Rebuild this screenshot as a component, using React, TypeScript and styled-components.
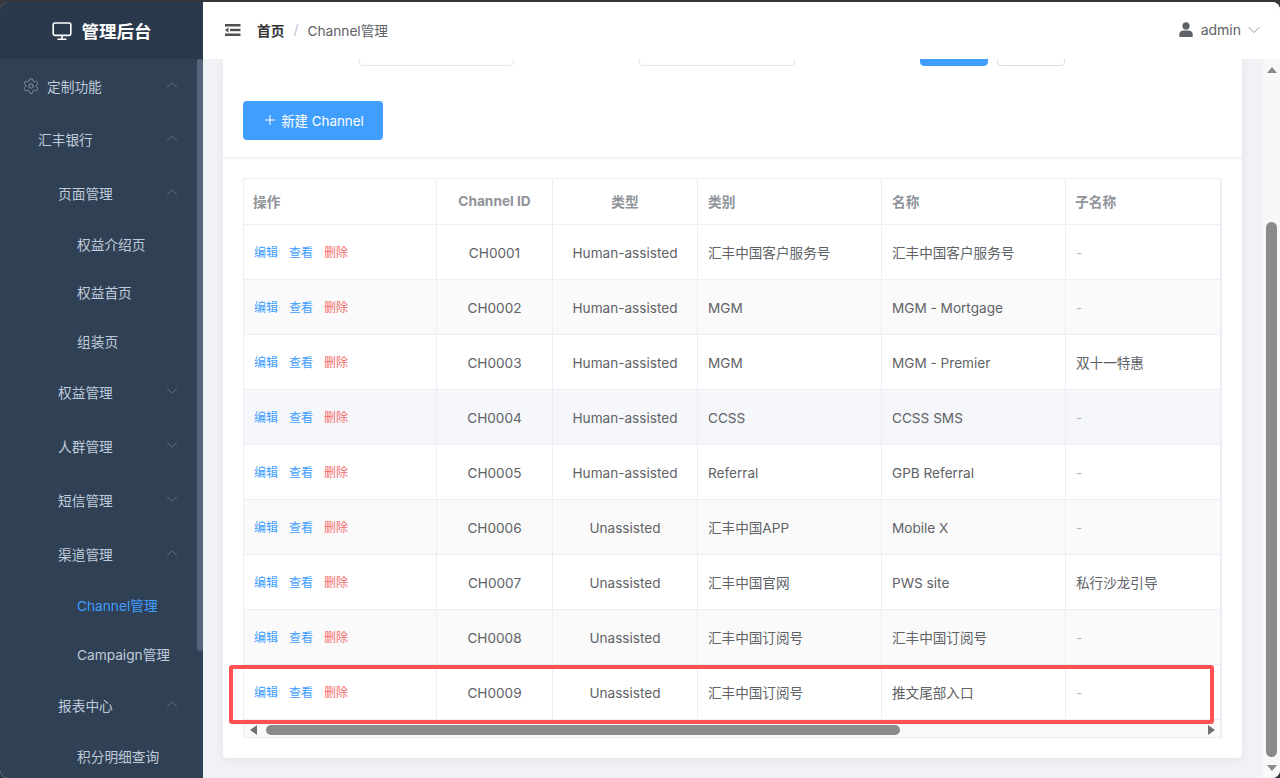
import React from "react";
import styled, { createGlobalStyle } from "styled-components";
import { ChevronDown, ChevronUp, Plus, Settings } from "lucide-react";

const FONT = `Inter, "Noto Sans CJK SC", sans-serif`;

const Global = createGlobalStyle`
  html, body { margin: 0; padding: 0; height: 100%; background: #34363a; overflow: hidden; }
  * { box-sizing: border-box; }
  body { font-family: ${FONT}; }
`;

const Frame = styled.div`
  position: relative; width: 1280px; height: 776px; margin-top: 2px;
  display: flex; overflow: hidden; border-radius: 8px; background: #f0f2f5;
`;
const Sidebar = styled.aside`
  width: 203px; flex: none; display: flex; flex-direction: column; background: #304156;
`;
const Logo = styled.div`
  height: 57px; flex: none; background: #2b394c; display: flex; align-items: center; justify-content: center;
  gap: 10px; color: #fff; font-size: 17.5px; font-weight: 700;
`;
const SideBody = styled.div`
  flex: 1; min-height: 0; display: flex; overflow: hidden;
`;
const Nav = styled.nav`
  flex: 1; min-width: 0;
`;
const NavRow = styled.div<{ $h: number; $pad: number; $active?: boolean }>`
  position: relative; height: ${p => p.$h}px; padding-left: ${p => p.$pad}px; display: flex; align-items: center;
  font-size: 13.7px; color: ${p => (p.$active ? "#409eff" : "#bfcbd9")};
  svg.icon { margin: 0 7px 0 -1px; color: #8f99a5; }
`;
const Caret = styled.span`
  position: absolute; left: 163px; top: 50%; margin-top: -10px; display: flex; color: #76828f;
`;
const SideTrack = styled.div`
  width: 6px; flex: none; background: #304156;
`;
const SideThumb = styled.div`
  width: 6px; height: 592px; background: #55647a; border-radius: 3px;
`;

const Main = styled.main`
  flex: 1; min-width: 0; display: flex; flex-direction: column;
`;
const Header = styled.header`
  height: 57px; flex: none; background: #fff; display: flex; align-items: center; padding: 0 16px 2px 22px;
  font-size: 13.7px; color: #606266;
`;
const Crumb = styled.span<{ $strong?: boolean }>`
  font-weight: ${p => (p.$strong ? 700 : 400)}; color: ${p => (p.$strong ? "#303133" : "#606266")};
  ${p => p.$strong && "margin-left: 16px;"}
`;
const CrumbSep = styled.span`
  margin: 0 9px; color: #c0c4cc; font-size: 14px;
`;
const User = styled.div`
  margin-left: auto; display: flex; align-items: center; gap: 8px; font-size: 14px; color: #606266;
  svg:last-child { margin-left: -5px; color: #7d8084; }
`;
const Body = styled.div`
  flex: 1; min-height: 0; display: flex;
`;
const Content = styled.div`
  flex: 1; min-width: 0; padding: 0 21px 0 20px; overflow: hidden;
`;
const Card = styled.section`
  background: #fff; border-radius: 0 0 4px 4px; box-shadow: 0 2px 12px rgba(0,0,0,.06); height: 699px;
`;
const FilterRow = styled.div`
  height: 7px; overflow: hidden; display: flex; align-items: flex-end; padding-left: 136px;
`;
const FilterInput = styled.div`
  width: 155px; height: 40px; flex: none; margin-right: 125px; border: 1px solid #e4e7ed; border-radius: 4px;
  & + & { width: 156px; }
`;
const FilterButton = styled.div<{ $primary?: boolean }>`
  width: 68px; height: 40px; flex: none; margin-right: 9px; border-radius: 4px;
  background: ${p => (p.$primary ? "#409eff" : "#fff")}; border: 1px solid ${p => (p.$primary ? "#409eff" : "#dcdfe6")};
`;
const Toolbar = styled.div`
  padding: 35px 20px 17px; border-bottom: 2px solid #f2f3f7;
`;
const NewButton = styled.button`
  width: 140px; height: 39px; border: 0; border-radius: 4px; background: #409eff; color: #fff; padding: 0 0 1px;
  display: flex; align-items: center; justify-content: center; gap: 3px; font: 13.4px ${FONT};
`;
const TableArea = styled.div`
  padding: 19px 20px 0;
`;
const TableBox = styled.div`
  width: 979px; height: 560px; border: 1px solid #ebeef5; border-right-width: 2px; position: relative; overflow: hidden;
`;
const Table = styled.table`
  border-collapse: separate; border-spacing: 0; table-layout: fixed; width: 976px;
`;
const Th = styled.th<{ $center?: boolean }>`
  height: 46px; padding: 0 10px 2px; font-size: 13.7px; font-weight: 700; color: #909399;
  text-align: ${p => (p.$center ? "center" : "left")}; border-bottom: 1px solid #ebeef5; border-right: 1px solid #ebeef5;
  &:first-child, &:last-child { padding-left: 9px; }
  &:last-child { border-right: 0; }
`;
const Tr = styled.tr<{ $bg: string }>`
  background: ${p => p.$bg};
`;
const Td = styled.td<{ $center?: boolean; $muted?: boolean; $latin?: boolean }>`
  height: 55px; padding: ${p => (p.$latin ? "2px" : "0")} 10px 0; font-size: 13.6px; color: ${p => (p.$muted ? "#b4b7bd" : "#606266")};
  text-align: ${p => (p.$center ? "center" : "left")}; border-bottom: 1px solid #ebeef5; border-right: 1px solid #ebeef5;
  white-space: nowrap; overflow: hidden;
  &:last-child { border-right: 0; }
`;
const Actions = styled.div`
  display: flex; gap: 11px; margin-top: -1px;
`;
const Action = styled.span<{ $danger?: boolean }>`
  font-size: 12px; color: ${p => (p.$danger ? "#f56c6c" : "#409eff")};
`;
const HBar = styled.div`
  height: 18px; display: flex; align-items: center; background: #fafafa; padding: 2px 5px 0 6px; gap: 9px;
`;
const HThumb = styled.div`
  width: 634px; height: 10px; background: #8a8a8a; border-radius: 5px;
`;
const Arrow = styled.span<{ $dir: "l" | "r" | "u" | "d" }>`
  width: 0; height: 0; flex: none; border-style: solid; border-color: transparent;
  ${p => p.$dir === "l" && "border-width: 5px 7px 5px 0; border-right-color: #6f6f6f;"}
  ${p => p.$dir === "r" && "border-width: 5px 0 5px 7px; border-left-color: #6f6f6f; margin-left: auto;"}
  ${p => p.$dir === "u" && "border-width: 0 5px 6px; border-bottom-color: #8a8a8a;"}
  ${p => p.$dir === "d" && "border-width: 6px 5px 0; border-top-color: #8a8a8a;"}
`;
const PageBar = styled.div`
  width: 17px; flex: none; background: #f8f8f8; display: flex; flex-direction: column; align-items: center; padding: 8px 0 6px;
`;
const PageGap = styled.div`
  height: 149px; flex: none;
`;
const PageThumb = styled.div`
  width: 11px; height: 535px; background: #8a8a8a; border-radius: 6px; margin-bottom: 8px;
`;
const RedMark = styled.div`
  position: absolute; left: 229px; top: 663px; width: 985px; height: 59px;
  border: 4px solid #ff5053; border-radius: 3px; pointer-events: none;
`;

const MonitorIcon = () => (
  <svg width="20" height="20" viewBox="0 0 20 20" fill="none" stroke="#fff" strokeWidth="1.6">
    <rect x="1.2" y="2" width="17.6" height="12.4" rx="1.6" />
    <path d="M10 14.4v4M5.5 18.2h9" />
  </svg>
);
const FoldIcon = () => (
  <svg width="16" height="12" viewBox="0 0 16 12" fill="#4f4f4f">
    <rect x="0" y="0" width="15.5" height="2.5" />
    <rect x="5" y="4.8" width="10.5" height="2.4" />
    <rect x="0" y="9.5" width="15.5" height="2.5" />
    <path d="M0 6 3.5 3.5v5z" />
  </svg>
);
const UserIcon = () => (
  <svg width="14" height="15" viewBox="0 0 14 15" fill="#5f6368">
    <circle cx="7" cy="3.9" r="3.6" />
    <path d="M0.3 15v-2.4c0-2.6 2-4 4.2-4h5c2.2 0 4.2 1.4 4.2 4V15z" />
  </svg>
);

type NavItem = { label: string; h: number; pad: number; caret?: "u" | "d"; icon?: boolean; active?: boolean };
const nav: NavItem[] = [
  { label: "定制功能", h: 54, pad: 23, caret: "u", icon: true },
  { label: "汇丰银行", h: 52, pad: 38, caret: "u" },
  { label: "页面管理", h: 55, pad: 58, caret: "u" },
  { label: "权益介绍页", h: 48, pad: 77 },
  { label: "权益首页", h: 48, pad: 77 },
  { label: "组装页", h: 49, pad: 77 },
  { label: "权益管理", h: 54, pad: 58, caret: "d" },
  { label: "人群管理", h: 54, pad: 58, caret: "d" },
  { label: "短信管理", h: 54, pad: 58, caret: "d" },
  { label: "渠道管理", h: 54, pad: 58, caret: "u" },
  { label: "Channel管理", h: 48, pad: 77, active: true },
  { label: "Campaign管理", h: 49, pad: 77 },
  { label: "报表中心", h: 54, pad: 58, caret: "u" },
  { label: "积分明细查询", h: 48, pad: 77 },
];

const rows = [
  ["CH0001", "Human-assisted", "汇丰中国客户服务号", "汇丰中国客户服务号", "-"],
  ["CH0002", "Human-assisted", "MGM", "MGM - Mortgage", "-"],
  ["CH0003", "Human-assisted", "MGM", "MGM - Premier", "双十一特惠"],
  ["CH0004", "Human-assisted", "CCSS", "CCSS SMS", "-"],
  ["CH0005", "Human-assisted", "Referral", "GPB Referral", "-"],
  ["CH0006", "Unassisted", "汇丰中国APP", "Mobile X", "-"],
  ["CH0007", "Unassisted", "汇丰中国官网", "PWS site", "私行沙龙引导"],
  ["CH0008", "Unassisted", "汇丰中国订阅号", "汇丰中国订阅号", "-"],
  ["CH0009", "Unassisted", "汇丰中国订阅号", "推文尾部入口", "-"],
];

const rowBg = (i: number) => (i === 3 ? "#f5f7fa" : i % 2 === 1 ? "#fafafa" : "#fff");
const isLatin = (s: string) => /^[\x00-\x7f]+$/.test(s);

export default function App() {
  return (
    <>
      <Global />
      <Frame>
        <Sidebar>
          <Logo><MonitorIcon />管理后台</Logo>
          <SideBody>
            <Nav>
              {nav.map(n => (
                <NavRow key={n.label} $h={n.h} $pad={n.pad} $active={n.active}>
                  {n.icon && <Settings className="icon" size={18} strokeWidth={1.2} />}
                  {n.label}
                  {n.caret && (
                    <Caret>
                      {n.caret === "u" ? <ChevronUp size={18} strokeWidth={1} /> : <ChevronDown size={18} strokeWidth={1} />}
                    </Caret>
                  )}
                </NavRow>
              ))}
            </Nav>
            <SideTrack><SideThumb /></SideTrack>
          </SideBody>
        </Sidebar>
        <Main>
          <Header>
            <FoldIcon />
            <Crumb $strong>首页</Crumb>
            <CrumbSep>/</CrumbSep>
            <Crumb>Channel管理</Crumb>
            <User>
              <UserIcon />
              admin
              <ChevronDown size={20} strokeWidth={1} />
            </User>
          </Header>
          <Body>
            <Content>
              <Card>
                <FilterRow>
                  <FilterInput />
                  <FilterInput />
                  <FilterButton $primary />
                  <FilterButton />
                </FilterRow>
                <Toolbar>
                  <NewButton><Plus size={16} strokeWidth={1.5} />新建 Channel</NewButton>
                </Toolbar>
                <TableArea>
                  <TableBox>
                    <Table>
                      <colgroup>
                        <col width={193} /><col width={116} /><col width={145} /><col width={184} /><col width={184} /><col width={154} />
                      </colgroup>
                      <thead>
                        <tr>
                          <Th>操作</Th><Th $center>Channel ID</Th><Th $center>类型</Th><Th>类别</Th><Th>名称</Th><Th>子名称</Th>
                        </tr>
                      </thead>
                      <tbody>
                        {rows.map((r, i) => (
                          <Tr key={r[0]} $bg={rowBg(i)}>
                            <Td>
                              <Actions>
                                <Action>编辑</Action><Action>查看</Action><Action $danger>删除</Action>
                              </Actions>
                            </Td>
                            <Td $center $latin>{r[0]}</Td>
                            <Td $center $latin>{r[1]}</Td>
                            <Td $latin={isLatin(r[2])}>{r[2]}</Td>
                            <Td $latin={isLatin(r[3])}>{r[3]}</Td>
                            <Td $muted={r[4] === "-"} $latin={isLatin(r[4])}>{r[4]}</Td>
                          </Tr>
                        ))}
                      </tbody>
                    </Table>
                    <HBar>
                      <Arrow $dir="l" />
                      <HThumb />
                      <Arrow $dir="r" />
                    </HBar>
                  </TableBox>
                </TableArea>
              </Card>
            </Content>
            <PageBar>
              <Arrow $dir="u" />
              <PageGap />
              <PageThumb />
              <Arrow $dir="d" />
            </PageBar>
          </Body>
        </Main>
        <RedMark />
      </Frame>
    </>
  );
}
